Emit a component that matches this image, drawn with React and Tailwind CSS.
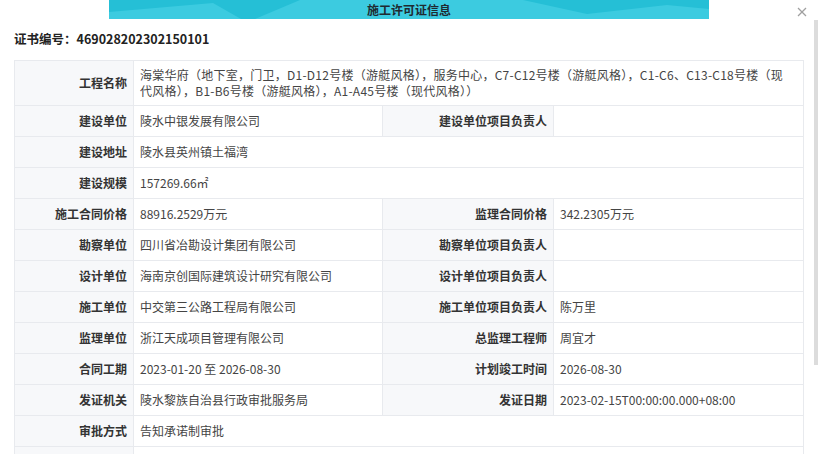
import React from 'react';

const FONT = { fontFamily: '"Noto Sans CJK SC", "Noto Sans", sans-serif' };

const ROWS = [
  ['建设单位', '陵水中银发展有限公司', '建设单位项目负责人', ''],
  ['建设地址', '陵水县英州镇土福湾'],
  ['建设规模', '157269.66㎡'],
  ['施工合同价格', '88916.2529万元', '监理合同价格', '342.2305万元'],
  ['勘察单位', '四川省冶勘设计集团有限公司', '勘察单位项目负责人', ''],
  ['设计单位', '海南京创国际建筑设计研究有限公司', '设计单位项目负责人', ''],
  ['施工单位', '中交第三公路工程局有限公司', '施工单位项目负责人', '陈万里'],
  ['监理单位', '浙江天成项目管理有限公司', '总监理工程师', '周宜才'],
  ['合同工期', '2023-01-20 至 2026-08-30', '计划竣工时间', '2026-08-30'],
  ['发证机关', '陵水黎族自治县行政审批服务局', '发证日期', '2023-02-15T00:00:00.000+08:00'],
  ['审批方式', '告知承诺制审批'],
  ['', ''],
];

const label = 'border border-[#e8eaee] bg-[#f7f8fa] text-right pr-[6px] font-bold text-[#333] whitespace-nowrap';
const value = 'border border-[#e8eaee] text-left pl-[6px] text-[#444]';

export default function App() {
  return (
    <div className="relative w-[818px] h-[454px] overflow-hidden bg-white" style={FONT}>
      <div className="relative mx-auto w-[600px] h-[19px] bg-[#25bfd6] overflow-hidden">
        <svg className="absolute inset-0" width="600" height="19" viewBox="0 0 600 19">
          <polygon points="0,19 0,12 104,3 132,19" fill="#3ccbe0" />
          <polygon points="146,19 191,0 414,0 478,14 558,5 600,9 600,19" fill="#3ccbe0" />
        </svg>
        <div className="relative text-center text-[12px] font-bold leading-[19px] text-[#1f2a30]">施工许可证信息</div>
      </div>

      <div className="h-[41px] flex items-center pl-[14px] text-[12.5px] font-bold text-[#222]">
        证书编号：469028202302150101
      </div>

      <table className="ml-[14px] w-[789px] table-fixed border-collapse text-[12px]">
        <colgroup>
          <col className="w-[119px]" />
          <col className="w-[249px]" />
          <col className="w-[171px]" />
          <col className="w-[250px]" />
        </colgroup>
        <tbody>
          <tr className="h-[45px]">
            <td className={label}>工程名称</td>
            <td colSpan={3} className={value + ' leading-[16px] pr-[4px] tracking-[0.25px] whitespace-nowrap'}>
              海棠华府（地下室，门卫，D1-D12号楼（游艇风格），服务中心，C7-C12号楼（游艇风格），C1-C6、C13-C18号楼（现
              <br />
              代风格），B1-B6号楼（游艇风格），A1-A45号楼（现代风格））
            </td>
          </tr>
          {ROWS.map((r, i) => (
            <tr key={i} className="h-[31px]">
              <td className={label}>{r[0]}</td>
              {r.length === 2 ? (
                <td colSpan={3} className={value}>{r[1]}</td>
              ) : (
                <>
                  <td className={value}>{r[1]}</td>
                  <td className={label}>{r[2]}</td>
                  <td className={value}>{r[3]}</td>
                </>
              )}
            </tr>
          ))}
        </tbody>
      </table>

      <svg className="absolute left-[797px] top-[7px]" width="10" height="10" viewBox="0 0 10 10" stroke="#a0a0a0" strokeWidth="1.2">
        <line x1="1" y1="1" x2="9" y2="9" />
        <line x1="9" y1="1" x2="1" y2="9" />
      </svg>
      <div className="absolute left-[814px] top-[20px] w-[4px] h-[345px] bg-[#dcdcdc]" />
    </div>
  );
}
